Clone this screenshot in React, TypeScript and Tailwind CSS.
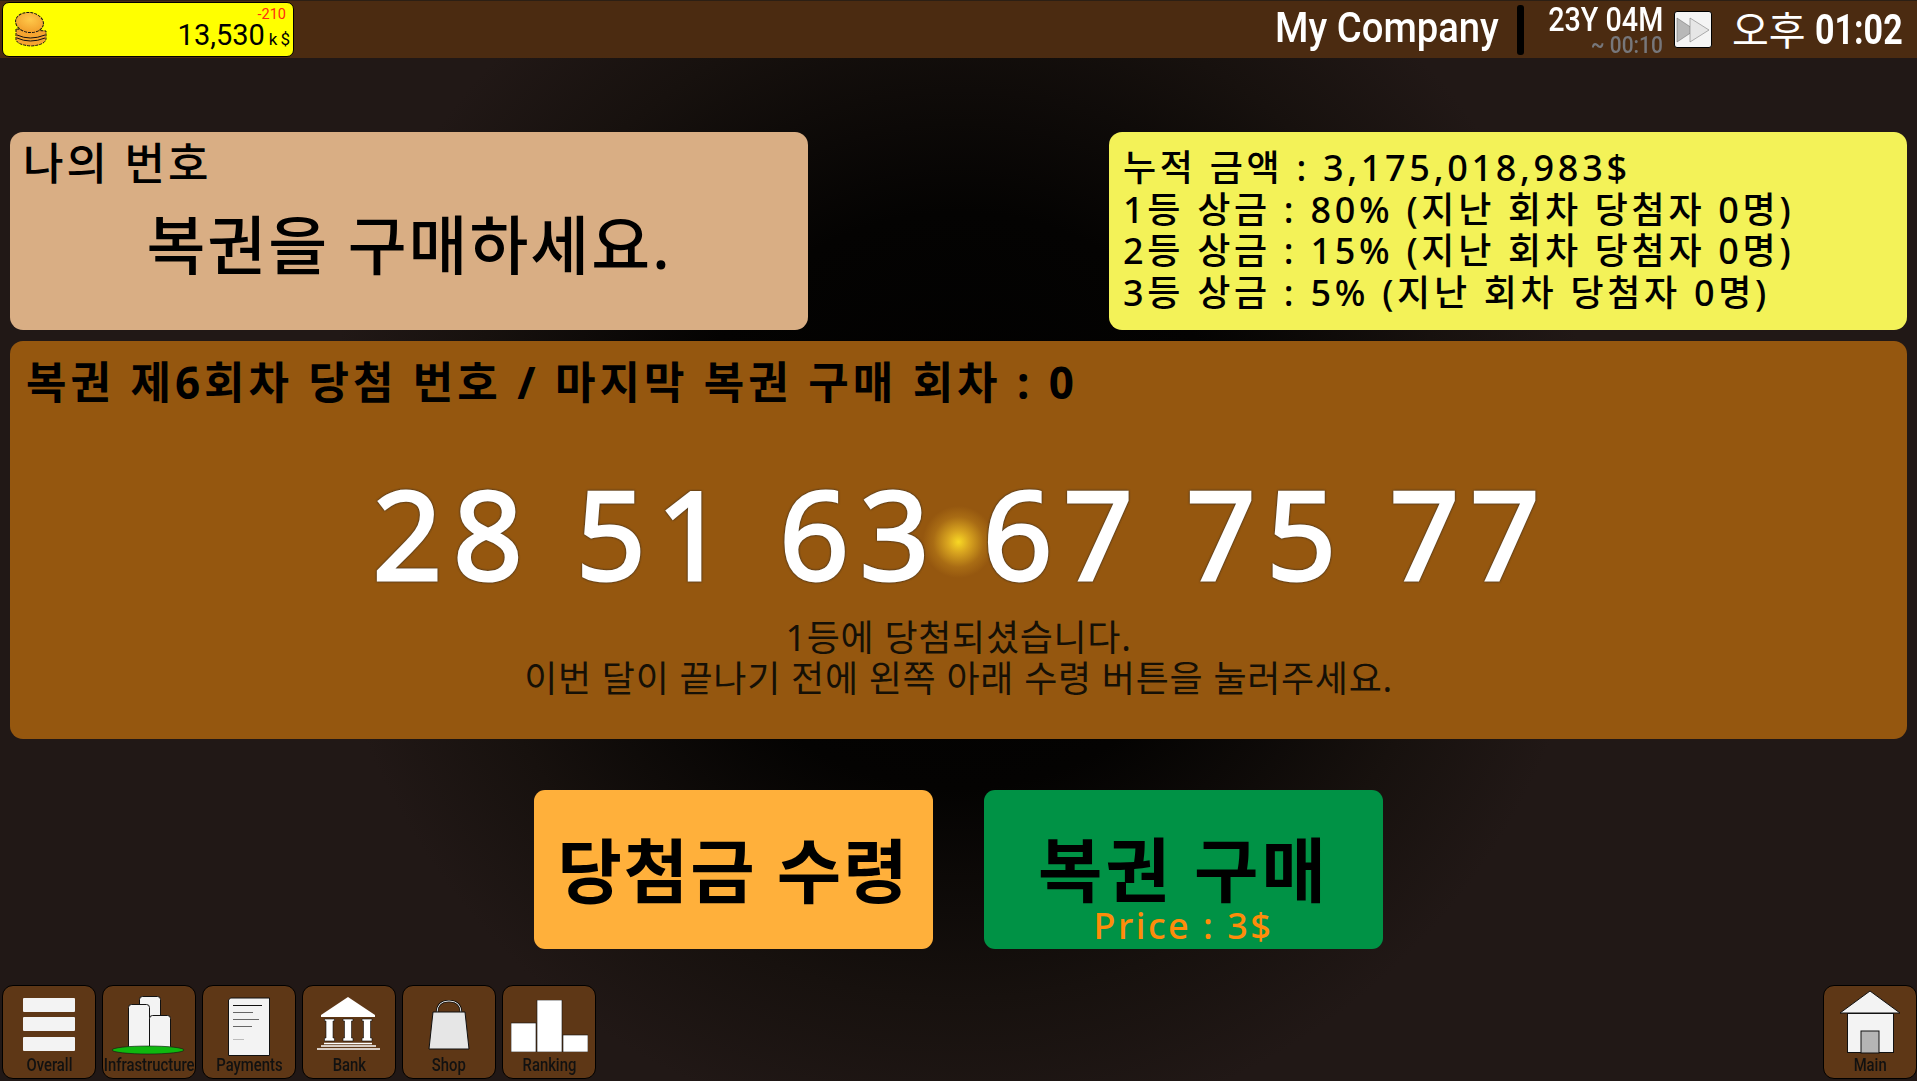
import React from "react";

const kr = "font-['Noto_Sans','Noto_Sans_CJK_KR',sans-serif]";

function Coins() {
  return (
    <svg width="32" height="35" viewBox="0 0 32 35">
      <defs>
        <radialGradient id="c" cx="50%" cy="35%" r="70%">
          <stop offset="0%" stopColor="#ffc94a" />
          <stop offset="100%" stopColor="#f09a28" />
        </radialGradient>
      </defs>
      <path d="M1 17 V28 Q3 33 16 34 Q30 33 31 27 V19 Z" fill="#f5a430" stroke="#111" strokeWidth="1" strokeDasharray="3 1" />
      <path d="M2 26 Q15 32 30 26 M2 23 Q15 29 30 23" fill="none" stroke="#111" strokeWidth="1" />
      <ellipse cx="14.500" cy="10.500" rx="14" ry="10" transform="rotate(8 14.500 10.500)" fill="url(#c)" stroke="#111" strokeWidth="1" strokeDasharray="3 1" />
    </svg>
  );
}

function Overall() {
  return (
    <svg width="54" height="54" viewBox="0 0 54 54">
      <rect x="1" y="0" width="52" height="14" rx="1" fill="#f3f3f3" />
      <rect x="1" y="19" width="52" height="14" rx="1" fill="#f3f3f3" />
      <rect x="1" y="39" width="52" height="14" rx="1" fill="#f3f3f3" />
    </svg>
  );
}
function Infra() {
  return (
    <svg width="76" height="60" viewBox="0 0 76 60">
      <rect x="28.500" y="0.500" width="21" height="52" rx="3" fill="#f3f3f3" stroke="#111" />
      <rect x="17.500" y="8.500" width="21" height="45" rx="3" fill="#f3f3f3" stroke="#111" />
      <rect x="38.500" y="19.500" width="21" height="34" rx="3" fill="#f3f3f3" stroke="#111" />
      <ellipse cx="37" cy="54" rx="36" ry="4" fill="#0fb80f" stroke="#111" strokeWidth="0.6" />
    </svg>
  );
}
function Payments() {
  return (
    <svg width="44" height="60" viewBox="0 0 44 60">
      <path d="M3.500 1 H42.500 V58.500 H1.500 V3 Z" fill="#f3f3f3" stroke="#111" />
      <path d="M6 8.500 H35" stroke="#111" />
      <path d="M6 15.500 H26 M6 22.500 H32 M6 29.500 H25" stroke="#666" />
      <path d="M6 42.500 H17" stroke="#bbb" />
    </svg>
  );
}
function Bank() {
  return (
    <svg width="64" height="53" viewBox="0 0 64 53">
      <path d="M31 0 L58 18 V20 H4 V18 Z" fill="#fff" />
      <path d="M7.500 22 H17.500 V24 H16 V41 H17.500 V44 H7.500 V41 H9 V24 H7.500 Z" fill="#fff" stroke="#111" strokeWidth="0.6" />
      <path d="M26 22 H36 V24 H34.500 V41 H36 V44 H26 V41 H27.500 V24 H26 Z" fill="#fff" stroke="#111" strokeWidth="0.6" />
      <path d="M45 22 H55 V24 H53.500 V41 H55 V44 H45 V41 H46.500 V24 H45 Z" fill="#fff" stroke="#111" strokeWidth="0.6" />
      <path d="M7 46.500 H55 M4 49 H59 M0 52 H63" stroke="#fff" strokeWidth="1.300" />
    </svg>
  );
}
function Shop() {
  return (
    <svg width="42" height="50" viewBox="0 0 42 50">
      <path d="M9 13 Q9 1 21 1 Q33 1 33 13" fill="none" stroke="#111" strokeWidth="2.500" />
      <path d="M9 13 Q9 1 21 1 Q33 1 33 13" fill="none" stroke="#ddd" strokeWidth="1" />
      <path d="M5 12 H37 L41 49 H1 Z" fill="#e6e6e6" stroke="#111" />
    </svg>
  );
}
function Rank() {
  return (
    <svg width="77" height="52" viewBox="0 0 77 52">
      <rect x="0" y="23" width="25" height="29" fill="#fff" stroke="#111" strokeWidth="0.6" />
      <rect x="26" y="0" width="25" height="52" fill="#fff" stroke="#111" strokeWidth="0.6" />
      <rect x="52" y="35" width="25" height="17" fill="#fff" stroke="#111" strokeWidth="0.6" />
    </svg>
  );
}
function House() {
  return (
    <svg width="62" height="64" viewBox="0 0 62 64">
      <path d="M31 1 L61 23 H1 Z" fill="#f3f3f3" stroke="#111" />
      <rect x="8.500" y="23.500" width="46" height="39" fill="#f3f3f3" stroke="#111" />
      <rect x="22" y="41" width="18" height="22" fill="#b5b5b5" stroke="#111" />
    </svg>
  );
}

function NavBtn({ label, children, pad }: { label: string; children: React.ReactNode; pad: string }) {
  return (
    <div className="w-[94px] h-[94px] bg-[#5e3716] border border-black rounded-[11px] flex flex-col items-center overflow-hidden">
      <div className={`h-[68px] shrink-0 flex items-start justify-center ${pad}`}>{children}</div>
      <div className="font-['Roboto',sans-serif] font-medium text-[19px] leading-[22px] text-[#111] whitespace-nowrap scale-x-[0.78]">
        {label}
      </div>
    </div>
  );
}

export default function App() {
  return (
    <div className={`w-[1917px] h-[1081px] overflow-hidden flex flex-col ${kr} bg-[#211816] bg-[radial-gradient(circle_640px_at_958px_500px,#000000_0%,#040302_45%,#17110e_78%,#211816_100%)]`}>
      {/* top bar */}
      <div className="h-[58px] shrink-0 bg-[#4b2b11] border-t border-[#2c1f14] flex items-center pl-[2px] pr-[18px] text-white">
        <div className="w-[292px] h-[55px] bg-[#ffff00] border border-black rounded-[7px] relative flex items-center pl-[12px]">
          <Coins />
          <span className="absolute right-[7px] top-[3px] text-[14.500px] leading-[18px] text-[#ff2a10] font-['Roboto',sans-serif]">-210</span>
          <div className="ml-auto mt-[10px] mr-[3px] flex items-baseline text-black font-['Roboto',sans-serif]">
            <span className="text-[29px] leading-[36px]">13,530</span>
            <span className="text-[17px] ml-[4px]">k</span>
            <span className="text-[17px] ml-[3px]">$</span>
          </div>
        </div>
        <div className="ml-auto mb-[4px] font-['Roboto',sans-serif] font-medium text-[42px] leading-[50px] origin-right scale-x-[0.91] whitespace-nowrap">My Company</div>
        <div className="w-[7px] h-[50px] bg-black rounded-[3px] ml-[18px]" />
        <div className="ml-[23px] w-[116px] flex flex-col items-end font-['Roboto',sans-serif] font-medium">
          <div className="text-[33px] leading-[30px] whitespace-nowrap origin-right scale-x-[0.87]">23Y 04M</div>
          <div className="text-[24px] leading-[20px] text-[#77777b] whitespace-nowrap origin-right scale-x-[0.87]">~ 00:10</div>
        </div>
        <div className="ml-[11px] w-[38px] h-[37px] bg-[#f4f4f4] border border-black rounded-[3px] flex items-center justify-center">
          <svg width="34" height="28" viewBox="0 0 34 28">
            <path d="M1 2 L19 14 L1 26 Z" fill="#b8b8b8" stroke="#666" strokeWidth="0.5" />
            <path d="M14 2 L33 14 L14 26 Z" fill="#e6e6e6" stroke="#666" strokeWidth="0.5" />
          </svg>
        </div>
        <div className="ml-[20px] w-[72px] text-[40px] leading-[46px] whitespace-nowrap">오후</div>
        <div className="ml-[11px] w-[84px] origin-left scale-x-[0.81] font-['Roboto',sans-serif] font-bold text-[42px] leading-[46px] whitespace-nowrap">01:02</div>
      </div>

      {/* info panels */}
      <div className="mt-[74px] h-[198px] mx-[10px] flex justify-between shrink-0">
        <div className="w-[798px] bg-[#d9ae84] rounded-[13px] pl-[13px] pt-[3px]">
          <div className="text-[44px] leading-[56px] text-black font-medium tracking-[3px]">나의 번호</div>
          <div className="text-[64px] leading-[84px] text-black font-medium text-center mt-[12px] pr-[13px] tracking-[2px]">복권을 구매하세요.</div>
        </div>
        <div className="w-[798px] bg-[#f3f258] rounded-[13px] pl-[14px] pt-[15px] text-black font-medium text-[36px] leading-[41.500px] tracking-[3.700px]">
          <div>누적 금액 : 3,175,018,983$</div>
          <div>1등 상금 : 80% (지난 회차 당첨자 0명)</div>
          <div>2등 상금 : 15% (지난 회차 당첨자 0명)</div>
          <div>3등 상금 : 5% (지난 회차 당첨자 0명)</div>
        </div>
      </div>

      {/* draw result */}
      <div className="mt-[11px] mx-[10px] h-[398px] shrink-0 rounded-[13px] bg-[#95570f] bg-[radial-gradient(circle_36px_at_50%_50.500%,#f8d824_0%,#d9a51f_30%,#a96c14_70%,#95570f_100%)] pl-[16px] pt-[13px]">
        <div className="text-[44px] leading-[56px] text-black font-bold tracking-[4px]">복권 제6회차 당첨 번호 / 마지막 복권 구매 회차 : 0</div>
        <div className="mt-[53px] mr-[16px] pl-[6px] text-center text-white text-[122px] leading-[140px] font-normal tracking-[10.700px] whitespace-pre [-webkit-text-stroke:3px_#ffffff] [stroke-linejoin:round] [filter:drop-shadow(0_0_1px_#222222)]">
          {"28 51 63 67 75 77"}
        </div>
        <div className="mt-[14px] mr-[16px] text-center text-[#151006] text-[36px] leading-[41px] tracking-[0.700px]">
          <div>1등에 당첨되셨습니다.</div>
          <div>이번 달이 끝나기 전에 왼쪽 아래 수령 버튼을 눌러주세요.</div>
        </div>
      </div>

      {/* actions */}
      <div className="mt-[51px] h-[159px] shrink-0 flex justify-center gap-[51px]">
        <div className="w-[399px] bg-[#ffb03b] rounded-[11px] flex items-center justify-center pt-[4px] text-black text-[70px] font-bold tracking-[2px] whitespace-nowrap">
          당첨금 수령
        </div>
        <div className="w-[399px] bg-[#009245] rounded-[11px] flex flex-col items-center text-black">
          <div className="text-[70px] leading-[90px] font-bold mt-[35px] tracking-[3px] whitespace-nowrap">복권 구매</div>
          <div className="text-[36px] leading-[40px] text-[#ff8c0a] mt-[-9px] tracking-[2.500px] font-medium">Price : 3$</div>
        </div>
      </div>

      {/* bottom nav */}
      <div className="mt-[36px] flex pl-[2px] gap-[6px] items-start shrink-0">
        <NavBtn label="Overall" pad="pt-[12px]"><Overall /></NavBtn>
        <NavBtn label="Infrastructure" pad="pt-[10px]"><Infra /></NavBtn>
        <NavBtn label="Payments" pad="pt-[11px]"><Payments /></NavBtn>
        <NavBtn label="Bank" pad="pt-[11px]"><Bank /></NavBtn>
        <NavBtn label="Shop" pad="pt-[14px]"><Shop /></NavBtn>
        <NavBtn label="Ranking" pad="pt-[14px]"><Rank /></NavBtn>
        <div className="ml-auto"><NavBtn label="Main" pad="pt-[4px]"><House /></NavBtn></div>
      </div>
    </div>
  );
}
